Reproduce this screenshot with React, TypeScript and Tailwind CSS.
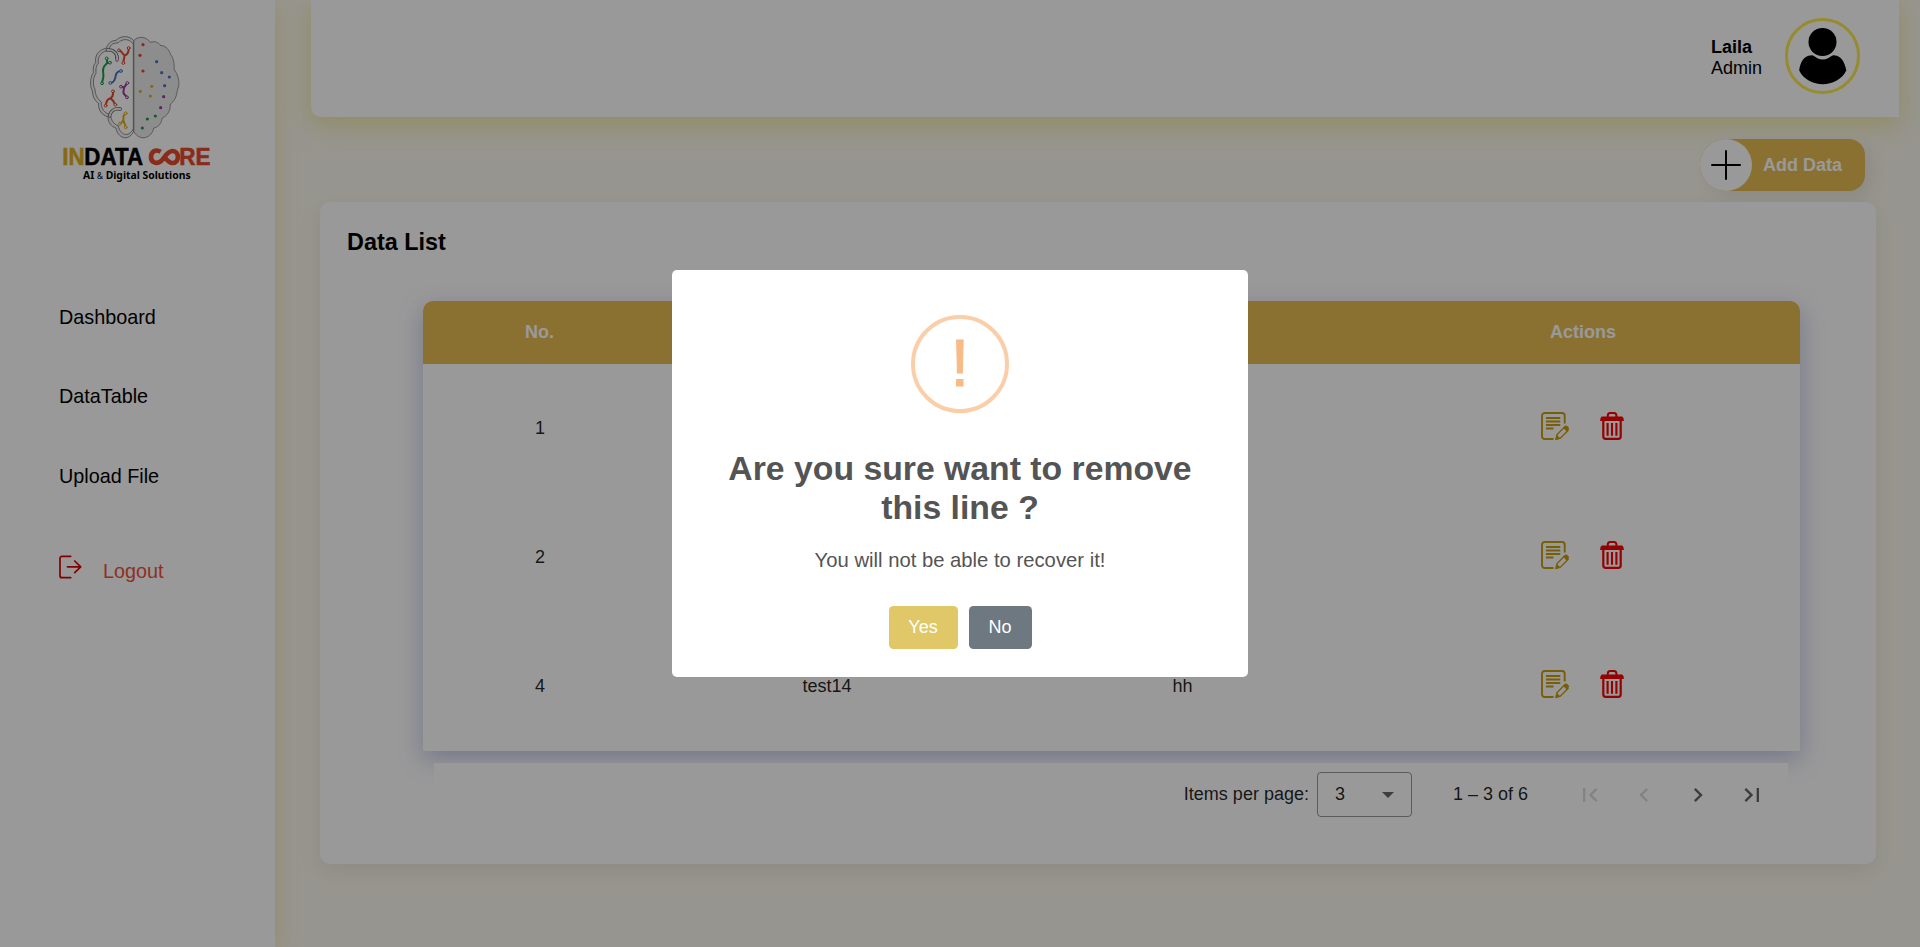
import React from "react";

type Row = { no: string; name?: string; value?: string };

const rows: Row[] = [{ no: "1" }, { no: "2" }, { no: "4", name: "test14", value: "hh" }];

const navItems = ["Dashboard", "DataTable", "Upload File"];

const dots: [number, number, string][] = [
  [309, 74, "#e8452a"],
  [300, 106, "#e8452a"],
  [309, 153, "#e8452a"],
  [350, 125, "#4a72c4"],
  [365, 158, "#4a72c4"],
  [388, 171, "#4a72c4"],
  [374, 197, "#4a72c4"],
  [335, 199, "#e0b020"],
  [301, 214, "#e0b020"],
  [331, 228, "#e0b020"],
  [371, 230, "#9a3fa0"],
  [362, 263, "#9a3fa0"],
  [346, 288, "#1f9a4a"],
  [322, 297, "#1f9a4a"],
  [307, 324, "#1f9a4a"],
];

function Branch({ d, color, ends }: { d: string; color: string; ends: [number, number][] }) {
  return (
    <g stroke={color} fill="none" strokeLinecap="round" strokeLinejoin="round">
      <path d={d} strokeWidth="6" />
      {ends.map(([x, y]) => (
        <circle key={`${x}-${y}`} cx={x} cy={y} r="4.2" fill="#fff" strokeWidth="3" />
      ))}
    </g>
  );
}

function Logo() {
  return (
    <svg viewBox="0 0 600 540" className="h-[180px] w-[200px]">
      <path
        d="M281 62 C292 48 318 48 331 67 C346 62 356 68 361 76 C380 77 388 92 392 104 C404 120 402 138 403 150 C418 168 420 196 412 210 C410 232 402 244 391 252 C392 274 380 288 366 295 C364 312 354 322 341 324 C337 352 300 368 281 334 Z"
        fill="#ececec"
        stroke="#666"
        strokeWidth="2"
      />
      <path
        d="M281 62 C266 44 240 48 228 61 C210 62 202 74 200 84 C176 90 164 104 167 128 C158 136 160 150 160 158 C150 172 149 200 157 212 C158 232 166 244 176 250 C174 270 186 286 204 290 C204 308 214 320 228 324 C232 352 264 368 281 334 Z"
        fill="#f4f4f4"
        stroke="#666"
        strokeWidth="2.2"
      />
      <path
        d="M280 72 C264 52 244 58 234 69 C216 68 208 78 208 90 C184 94 172 110 175 130 C166 140 168 152 168 160 C158 174 158 198 165 208 C166 228 174 238 184 246 C182 266 194 280 212 284 C212 300 222 314 235 317 C240 346 266 354 280 326 Z"
        fill="#fff"
        stroke="#666"
        strokeWidth="2.2"
      />
      <path d="M202 90 C222 88 234 102 231 120" stroke="#666" strokeWidth="10" strokeLinecap="round" fill="none" />
      <path d="M202 90 C222 88 234 102 231 120" stroke="#f4f4f4" strokeWidth="5.500" strokeLinecap="round" fill="none" />
      <path d="M209 288 C212 272 224 264 241 267" stroke="#666" strokeWidth="10" strokeLinecap="round" fill="none" />
      <path d="M209 288 C212 272 224 264 241 267" stroke="#f4f4f4" strokeWidth="5.500" strokeLinecap="round" fill="none" />
      <Branch color="#e8452a" d="M237 91 C246 92 248 104 254 106 C262 104 266 98 266 86 M254 106 L250 127" ends={[[237, 91], [266, 84], [250, 129]]} />
      <Branch color="#1f9a4a" d="M200 116 L202 130 L209 128 M200 130 C188 142 188 150 190 162 C192 172 188 180 186 188" ends={[[200, 115], [210, 128], [186, 190]]} />
      <Branch color="#4a72c4" d="M242 153 C230 154 228 162 226 172 C224 182 218 188 212 188" ends={[[243, 153], [211, 189]]} />
      <Branch color="#9a3fa0" d="M244 200 L252 203 L261 190 M252 203 C252 214 246 218 254 224 L260 231" ends={[[243, 200], [262, 189], [261, 232]]} />
      <Branch color="#e8452a" d="M219 216 C220 230 216 234 208 236 C198 240 200 248 197 256 M212 236 C220 240 222 246 225 253" ends={[[219, 214], [197, 257], [226, 254]]} />
      <Branch color="#e0b020" d="M257 280 C246 286 252 292 250 300 C248 308 244 308 241 311 M250 300 L257 320" ends={[[257, 280], [240, 311], [257, 322]]} />
      {dots.map(([x, y, c]) => (
        <circle key={`${x}-${y}`} cx={x} cy={y} r="4.8" fill={c} />
      ))}
      <g fontFamily="'Liberation Sans', Arial, sans-serif" fontWeight="700" fontSize="69">
        <text x="67" y="435" fill="#e0b020" stroke="#e0b020" strokeWidth="1.5" textLength="67" lengthAdjust="spacingAndGlyphs">IN</text>
        <text x="133" y="435" fill="#000" stroke="#000" strokeWidth="1.5" textLength="176" lengthAdjust="spacingAndGlyphs">DATA</text>
        <text x="418" y="435" fill="#e8492a" stroke="#e8492a" strokeWidth="1.5" textLength="94" lengthAdjust="spacingAndGlyphs">RE</text>
      </g>
      <path
        d="M362 395 C346 386 333 396 333 411 C333 428 350 433 362 424 C375 414 380 393 398 393 C419 393 419 429 398 429 C388 429 382 422 374 412"
        fill="none"
        stroke="#e8492a"
        strokeWidth="14"
      />
      <text x="129" y="477" fontSize="34" fontWeight="700" fontFamily="'Noto Sans', sans-serif" textLength="323" lengthAdjust="spacingAndGlyphs">
        AI <tspan fontWeight="400" fontSize="27">&amp;</tspan> Digital Solutions
      </text>
    </svg>
  );
}

function LogoutIcon() {
  return (
    <svg viewBox="0 0 24 24" className="h-6 w-6" fill="none" stroke="#dc0000" strokeWidth="1.7" strokeLinecap="round" strokeLinejoin="round">
      <path d="M11.700 1.300H3A2 2 0 0 0 1 3.300V20.700A2 2 0 0 0 3 22.700H11.700" />
      <path d="M8.500 11.800H21.700M15.700 6 21.700 11.800 15.700 17.600" />
    </svg>
  );
}

function Avatar() {
  return (
    <div className="flex h-[76px] w-[75px] justify-center rounded-full border-[3px] border-[#fae84b]">
      <svg viewBox="0 0 48 57" className="mt-[7px] h-[57px] w-12">
        <circle cx="23.5" cy="14" r="14" />
        <path d="M11.5 27.4C14 26.5 15.500 28.500 18 30Q23.500 33 29.500 30C32 28.500 33.500 26.500 36 27.400C41.500 27.400 46 34 47.300 42.500C43 51.500 33 56.200 23.700 56.200C14.500 56.200 4.500 51.500 .2 42.500C1 34 5.500 27.400 11.500 27.400Z" />
      </svg>
    </div>
  );
}

function EditIcon() {
  return (
    <svg viewBox="0 0 28 28" className="h-7 w-7" fill="none" stroke="#c79d10">
      <path d="M23.700 11.500V3.700A2.700 2.700 0 0 0 21 1H3.700A2.700 2.700 0 0 0 1 3.700V24.300A2.700 2.700 0 0 0 3.700 27H12.500" strokeWidth="1.900" />
      <path d="M5 6H19.300M5 9.500H19.300M5 13H19.300M5 16.500H12.500" strokeWidth="1.800" />
      <path d="M15 27.300 15.900 22.800 23.500 15 27 18.500 19.300 26.200Z" strokeWidth="1.400" />
      <path d="M14.300 28 15.500 22.600 19.700 26.700ZM22 15.800 24.300 13.600Q25.300 13 26.300 14L27.900 15.700Q28.300 16.800 27.600 17.600L25.600 19.500Z" fill="#c79d10" stroke="none" />
    </svg>
  );
}

function TrashIcon() {
  return (
    <svg viewBox="0 0 24 28" className="h-7 w-6" fill="none" stroke="#f80000">
      <path d="M7.800 5V3.600Q7.800 1 10.200 1H14Q16.400 1 16.400 3.600V5" strokeWidth="2" />
      <path d="M1.700 4.500H22.300Q23.900 5.500 23.900 9H.1Q.1 5.500 1.700 4.500Z" fill="#f80000" stroke="none" />
      <path d="M3.300 8V24.200Q3.300 26.900 5.700 26.900H18.300Q20.700 26.900 20.700 24.200V8" strokeWidth="2.200" />
      <path d="M7.600 11V23.700M12 11V23.700M16.400 11V23.700" strokeWidth="2.100" />
    </svg>
  );
}

function PageIcon({ d, off }: { d: string; off?: boolean }) {
  return (
    <span className="flex h-[54px] w-[54px] items-center justify-center">
      <svg viewBox="0 0 24 24" className={off ? "h-7 w-7 fill-black/[0.14]" : "h-7 w-7 fill-black/[0.6]"}>
        <path d={d} />
      </svg>
    </span>
  );
}

const columns = "grid grid-cols-[232px_344px_366px_435px] items-center text-center";

function DataTable() {
  return (
    <div className="ml-[103px] w-[1377px] rounded-t-[10px] bg-white shadow-[0_8px_24px_rgba(90,100,185,0.36)]">
      <div className={`${columns} h-[63px] rounded-t-[10px] bg-[#e6bc52] pb-px text-[18px] font-bold text-white`}>
        <span className="pl-px">No.</span>
        <span />
        <span />
        <span className="pl-px">Actions</span>
      </div>
      {rows.map((r) => (
        <div key={r.no} className={`${columns} h-[129px] text-[18px] text-black/[0.87]`}>
          <span className="pl-0.5">{r.no}</span>
          <span>{r.name}</span>
          <span className="pl-px">{r.value}</span>
          <span className="flex justify-center gap-[31px] pb-[5px]">
            <EditIcon />
            <TrashIcon />
          </span>
        </div>
      ))}
    </div>
  );
}

function Paginator() {
  return (
    <div className="relative ml-[114px] mt-3 flex h-[63px] w-[1354px] items-center justify-end bg-white pr-[9px] text-[18px] text-black/[0.87]">
      <span>Items per page:</span>
      <div className="ml-2 mr-[41px] flex h-[45px] w-[95px] items-center justify-between rounded border border-black/40 pl-[17px] pr-[17px]">
        <span>3</span>
        <svg viewBox="0 0 12 6" className="h-[6px] w-3 fill-black/[0.6]">
          <path d="M0 0H12L6 6Z" />
        </svg>
      </div>
      <span className="mr-[35px]">1 – 3 of 6</span>
      <PageIcon off d="M18.41 16.59L13.82 12l4.590-4.590L17 6l-6 6 6 6zM6 6h2v12H6z" />
      <PageIcon off d="M15.410 7.410L14 6l-6 6 6 6 1.410-1.410L10.830 12z" />
      <PageIcon d="M10 6L8.590 7.410 13.170 12l-4.580 4.590L10 18l6-6z" />
      <PageIcon d="M5.590 7.410L10.180 12l-4.590 4.590L7 18l6-6-6-6zM16 6h2v12h-2z" />
    </div>
  );
}

function ConfirmDialog() {
  return (
    <div className="fixed inset-0 z-20 flex items-center justify-center bg-black/40">
      <div className="flex h-[407px] w-[576px] flex-col items-center rounded-[5px] bg-white text-[#545454]">
        <div className="mt-[45px] flex h-[98px] w-[98px] items-center justify-center rounded-full border-4 border-[#facea8] pb-[3px] text-[67.5px] leading-none text-[#f8bb86] [-webkit-text-stroke:1px_#f8bb86]">
          !
        </div>
        <h2 className="mt-9 w-[500px] text-center text-[33.75px] font-semibold leading-[39px]">
          Are you sure want to remove this line ?
        </h2>
        <p className="mt-[21px] text-[20.25px] leading-6">You will not be able to recover it!</p>
        <div className="mt-[34px] flex gap-[11px] text-[18px] text-white">
          <button className="h-[43px] w-[69px] rounded-[4.5px] bg-[#e0c868]">Yes</button>
          <button className="h-[43px] w-[63px] rounded-[4.5px] bg-[#6e7881]">No</button>
        </div>
      </div>
    </div>
  );
}

export default function App() {
  return (
    <div className="flex h-[947px] w-full overflow-hidden bg-[#fcf9ee] font-['Liberation_Sans',Arial,sans-serif] text-black">
      <aside className="h-full w-[275px] shrink-0 bg-white pt-5 shadow-[0_5px_22px_rgba(240,220,110,0.5)]">
        <div className="pl-10">
          <Logo />
        </div>
        <nav className="flex flex-col pl-[58px] pt-[78px] text-[19.8px]">
          {navItems.map((item) => (
            <a key={item} className="flex h-[79.5px] items-center pl-px">
              {item}
            </a>
          ))}
          <a className="mt-[39px] flex h-8 items-center text-[#f0503c]">
            <span className="mb-[9px] ml-px">
              <LogoutIcon />
            </span>
            <span className="ml-5">Logout</span>
          </a>
        </nav>
      </aside>
      <main className="flex min-w-0 flex-1 flex-col pl-9 pr-[21px]">
        <header className="flex h-[117px] shrink-0 justify-end rounded-bl-[10px] bg-white pr-[39px] pt-[18px] shadow-[0_7px_25px_rgba(230,218,90,0.5)]">
          <div className="mr-[23px] mt-[19px] text-[18px] leading-[21px]">
            <div className="font-bold">Laila</div>
            <div>Admin</div>
          </div>
          <Avatar />
        </header>
        <div className="mt-[22px] flex justify-end pr-[34px]">
          <button className="flex h-[52px] w-[165px] items-center rounded-l-[26px] rounded-r-[16px] bg-[#e6bc52] text-[18px] font-bold text-white shadow-[7px_7px_20px_rgba(0,0,0,0.08)]">
            <span className="flex h-[52px] w-[52px] items-center justify-center rounded-full bg-white">
              <svg viewBox="0 0 30 30" className="h-[30px] w-[30px]" stroke="#000" strokeWidth="2" strokeLinecap="round">
                <path d="M15 1V29M1 15H29" />
              </svg>
            </span>
            <span className="ml-[11px]">Add Data</span>
          </button>
        </div>
        <section className="ml-[9px] mt-[11px] h-[662px] w-[1556px] rounded-[10px] bg-white shadow-[0_7px_25px_rgba(0,0,0,0.08)]">
          <h1 className="h-[99px] pl-[27px] pt-6 text-[23.4px] font-bold leading-8">Data List</h1>
          <DataTable />
          <Paginator />
        </section>
      </main>
      <ConfirmDialog />
    </div>
  );
}
